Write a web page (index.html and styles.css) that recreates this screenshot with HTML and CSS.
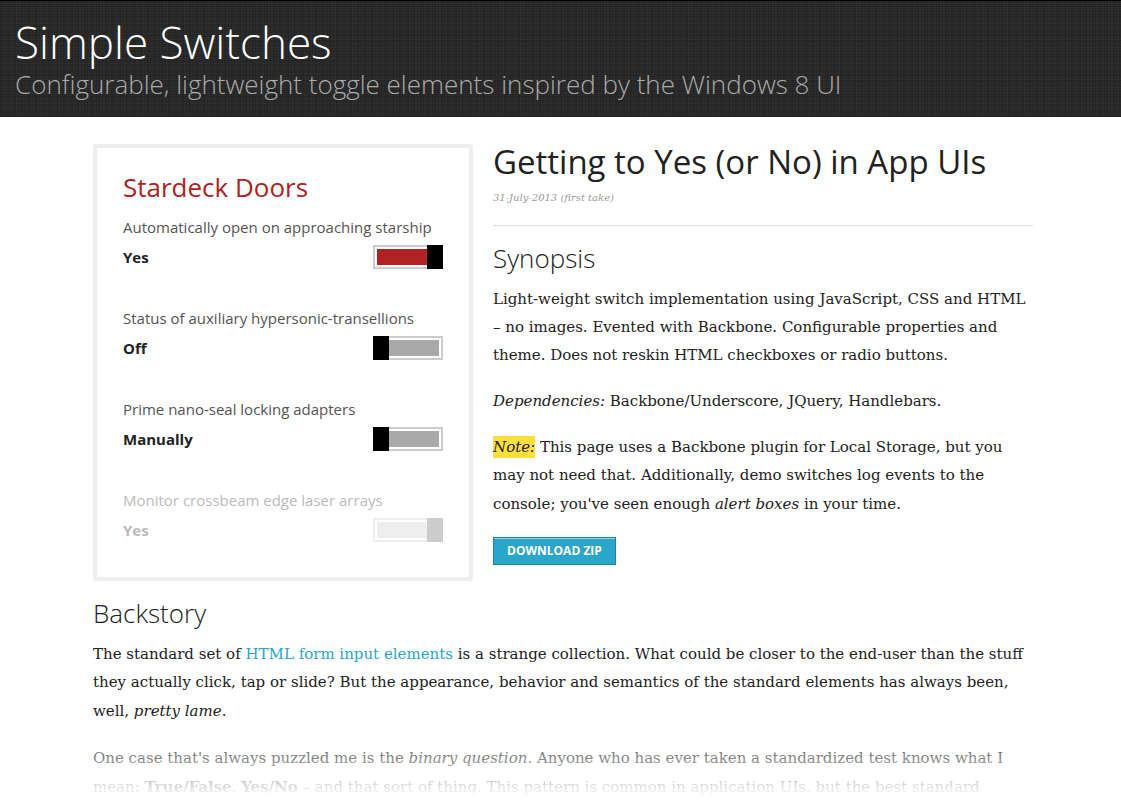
FILE: index.html
```html
<!DOCTYPE html>
<html lang="en">
<head>
<meta charset="utf-8">
<title>Simple Switches</title>
<link rel="stylesheet" href="styles.css">
</head>
<body>
<header class="masthead">
  <h1 class="masthead-title">Simple Switches</h1>
  <p class="masthead-tagline">Configurable, lightweight toggle elements inspired by the Windows 8 UI</p>
</header>
<main class="page">
  <div class="intro">
    <section class="panel">
      <h2 class="panel-title">Stardeck Doors</h2>
      <div class="setting">
        <label class="setting-label" for="doors">Automatically open on approaching starship</label>
        <div class="setting-row"><span class="setting-value">Yes</span><input class="switch" type="checkbox" id="doors" checked></div>
      </div>
      <div class="setting">
        <label class="setting-label" for="status">Status of auxiliary hypersonic-transellions</label>
        <div class="setting-row"><span class="setting-value">Off</span><input class="switch" type="checkbox" id="status"></div>
      </div>
      <div class="setting">
        <label class="setting-label" for="prime">Prime nano-seal locking adapters</label>
        <div class="setting-row"><span class="setting-value">Manually</span><input class="switch" type="checkbox" id="prime"></div>
      </div>
      <div class="setting setting-disabled">
        <label class="setting-label" for="monitor">Monitor crossbeam edge laser arrays</label>
        <div class="setting-row"><span class="setting-value">Yes</span><input class="switch" type="checkbox" id="monitor" checked disabled></div>
      </div>
    </section>
    <article class="summary">
      <h2 class="summary-title">Getting to Yes (or No) in App UIs</h2>
      <p class="dateline">31-July-2013 (first take)</p>
      <h3 class="section-title">Synopsis</h3>
      <p class="copy">Light-weight switch implementation using JavaScript, CSS and HTML<br>– no images. Evented with Backbone. Configurable properties and<br>theme. Does not reskin HTML checkboxes or radio buttons.</p>
      <p class="copy"><em>Dependencies:</em> Backbone/Underscore, JQuery, Handlebars.</p>
      <p class="copy"><em class="mark">Note:</em> This page uses a Backbone plugin for Local Storage, but you<br>may not need that. Additionally, demo switches log events to the<br>console; you've seen enough <em class="loose">alert boxes</em> in your time.</p>
      <button class="download" type="button">DOWNLOAD ZIP</button>
    </article>
  </div>
  <section class="story">
    <h3 class="section-title">Backstory</h3>
    <p class="copy">The standard set of <a class="link" href="#">HTML form input elements</a> is a strange collection. What could be closer to the end-user than the stuff<br>they actually click, tap or slide? But the appearance, behavior and semantics of the standard elements has always been,<br>well, <em class="loose">pretty lame</em>.</p>
    <p class="copy">One case that's always puzzled me is the <em>binary question</em>. Anyone who has ever taken a standardized test knows what I<br>mean: <strong class="loose">True/False</strong>, <strong class="loose">Yes/No</strong> – and that sort of thing. This pattern is common in application UIs, but the best standard</p>
  </section>
</main>
<div class="fade"></div>
</body>
</html>
```
FILE: styles.css
```css
* { box-sizing: border-box; }
body {
  margin: 0;
  height: 100vh;
  overflow: hidden;
  background: #fff;
  color: #222;
  font-family: "Open Sans", sans-serif;
}
h1, h2, h3, p { margin: 0; }
.masthead {
  padding: 16px 15px 15px;
  border-top: 1px solid #000;
  background-color: #303030;
  background-image:
    repeating-linear-gradient(0deg, rgba(0, 0, 0, .16) 0 1px, transparent 1px 2px),
    repeating-linear-gradient(90deg, rgba(0, 0, 0, .1) 0 1px, transparent 1px 3px),
    repeating-linear-gradient(90deg, rgba(0, 0, 0, .08) 0 2px, transparent 2px 7px),
    repeating-linear-gradient(0deg, rgba(0, 0, 0, .08) 0 2px, transparent 2px 5px);
}
.masthead-title {
  color: #fff;
  font-size: 44px;
  font-weight: 300;
  line-height: 50px;
}
.masthead-tagline {
  color: #aaa;
  font-size: 26px;
  font-weight: 300;
  line-height: 35px;
}
.page {
  max-width: 945px;
  margin: 27px auto 0;
  padding-left: 5px;
}
.intro {
  display: flex;
  gap: 20px;
}
.panel {
  flex: 0 0 380px;
  padding: 21px 26px 0;
  border: 4px solid #eee;
  border-radius: 3px;
}
.panel-title {
  color: #b22222;
  font-size: 26px;
  font-weight: 400;
  line-height: 36px;
}
.setting { margin: 10px 0 37px; font-size: 15px; }
.setting + .setting { margin-top: 0; }
.setting-label {
  display: block;
  color: #555;
  line-height: 24px;
}
.setting-row {
  display: flex;
  align-items: center;
  justify-content: space-between;
  margin-top: 6px;
}
.setting-value {
  font-weight: 700;
  line-height: 24px;
}
.switch {
  appearance: none;
  position: relative;
  width: 70px;
  height: 24px;
  margin: 0;
  padding: 2px;
  border: 2px solid #ccc;
  background: #a9a9a9 content-box;
}
.switch::before {
  content: "";
  position: absolute;
  top: -2px;
  left: -2px;
  width: 16px;
  height: 24px;
  background: #000;
}
.switch:checked { background-color: #b22222; }
.switch:checked::before { left: auto; right: -2px; }
.switch:disabled { border-color: #eee; background-color: #eee; }
.switch:disabled::before { background: #ccc; }
.setting-disabled { margin-bottom: 35px; }
.setting-disabled .setting-label,
.setting-disabled .setting-value { color: #bbb; }
.summary { flex: 1; min-width: 0; }
.summary-title {
  font-size: 33px;
  font-weight: 400;
  line-height: 36px;
}
.dateline {
  padding: 8px 0 17px;
  border-bottom: 1px solid #ddd;
  color: #999;
  font: italic 10px/20px "DejaVu Serif", serif;
}
.section-title {
  margin-bottom: 9px;
  font-size: 26px;
  font-weight: 300;
  line-height: 36px;
}
.summary .section-title { margin-top: 14px; }
.copy {
  margin-bottom: 18px;
  font: 15px/28px "DejaVu Serif", serif;
  white-space: nowrap;
}
.loose { line-height: 30px; }
.mark { padding: 2px 0; background: #ffdf3d; }
.link { color: #2ba6cb; text-decoration: none; }
.download {
  display: block;
  padding: 4px 13px;
  border: 1px solid #1e81a0;
  background: #2ba6cb;
  box-shadow: inset 0 1px 0 rgba(255, 255, 255, .5);
  color: #fff;
  font: 700 12px/18px "Open Sans", sans-serif;
}
.story { margin-top: 14px; }
.fade {
  position: fixed;
  right: 0;
  bottom: 0;
  left: 0;
  height: 80px;
  background: linear-gradient(rgba(255, 255, 255, 0), #fff 90%);
}
```
